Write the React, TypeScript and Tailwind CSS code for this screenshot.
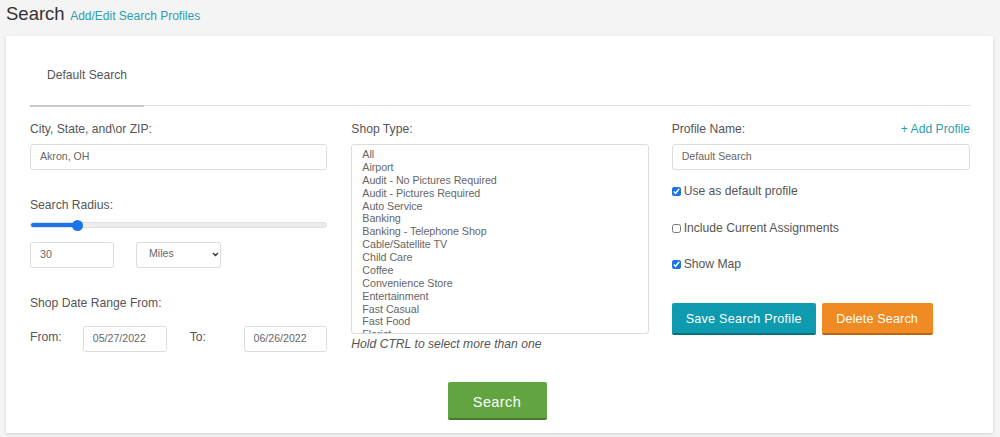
import React from "react";

const SHOP_TYPES = [
  "All",
  "Airport",
  "Audit - No Pictures Required",
  "Audit - Pictures Required",
  "Auto Service",
  "Banking",
  "Banking - Telephone Shop",
  "Cable/Satellite TV",
  "Child Care",
  "Coffee",
  "Convenience Store",
  "Entertainment",
  "Fast Casual",
  "Fast Food",
  "Florist",
  "Gas Station",
  "Grocery",
];

const field =
  "h-[26px] rounded-[3px] border border-[#dcdcdc] bg-white px-[9px] pb-[2px] text-[10.6px] text-[#666] outline-none";
const label = "h-[16px] text-[12.15px] text-[#555]";

function Check({ text, checked }: { text: string; checked?: boolean }) {
  return (
    <label className="flex h-[16px] items-center text-[12.15px] text-[#555]">
      <input
        type="checkbox"
        defaultChecked={checked}
        className="m-0 mr-[3px] h-[9px] w-[9px] accent-[#1a73e8]"
      />
      {text}
    </label>
  );
}

export default function App() {
  return (
    <div className="h-[437px] overflow-hidden bg-[#f4f4f4] font-['Liberation_Sans',Arial,sans-serif]">
      <header className="flex h-[36px] items-baseline gap-[5.5px] pl-[6px]">
        <h1 className="text-[18.5px] text-[#333]">Search</h1>
        <a className="text-[12px] text-[#2a9fb0]">Add/Edit Search Profiles</a>
      </header>

      <main className="mx-[6px] h-[397px] w-[987px] bg-white pl-[24px] pr-[23px] shadow-[0_1px_3px_rgba(0,0,0,0.15)]">
        {/* Tabs */}
        <div className="h-[70px] border-b border-[#ddd]">
          <div className="relative h-[70px] w-[114px] pl-[17px] pt-[30px] text-[12.1px] text-[#555]">
            Default Search
            <div className="absolute inset-x-0 bottom-[-1px] h-[2px] bg-[#c8c8c8]" />
          </div>
        </div>

        <div className="mt-[14px] grid grid-cols-3 gap-[24px]">
          {/* Location */}
          <section>
            <div className={label}>City, State, and\or ZIP:</div>
            <input defaultValue="Akron, OH" className={`${field} mt-[8px] w-full`} />
            <div className={`${label} mt-[26px]`}>Search Radius:</div>
            <input
              type="range"
              min={0}
              max={210}
              defaultValue={30}
              className="mt-[10px] block h-[6px] w-full appearance-none rounded-full border border-[#e0e0e0] bg-[linear-gradient(to_right,#1a73e8_16%,#ececec_16%)] [&::-webkit-slider-thumb]:h-[11px] [&::-webkit-slider-thumb]:w-[11px] [&::-webkit-slider-thumb]:appearance-none [&::-webkit-slider-thumb]:rounded-full [&::-webkit-slider-thumb]:bg-[#1a73e8]"
            />
            <div className="mt-[14px] flex gap-[22px]">
              <input defaultValue="30" className={`${field} w-[84px]`} />
              <div className="relative w-[85px]">
                <select className={`${field} block w-full appearance-none pl-[12px]`}>
                  <option>Miles</option>
                  <option>Kilometers</option>
                </select>
                <svg
                  viewBox="0 0 8 6"
                  className="pointer-events-none absolute right-[2px] top-[10px] h-[5px] w-[7px]"
                  fill="none"
                  stroke="#333"
                  strokeWidth="1.6"
                >
                  <path d="M1 1.2 L4 4.2 L7 1.2" />
                </svg>
              </div>
            </div>
            <div className={`${label} mt-[26px]`}>Shop Date Range From:</div>
            <div className="mt-[16px] flex">
              <span className="mt-[2px] w-[53px] text-[12.15px] text-[#555]">From:</span>
              <input defaultValue="05/27/2022" className={`${field} w-[84px]`} />
              <span className="ml-[23px] mt-[2px] w-[54px] text-[12.15px] text-[#555]">To:</span>
              <input defaultValue="06/26/2022" className={`${field} w-[84px] min-w-0`} />
            </div>
          </section>

          {/* Shop type */}
          <section>
            <div className={label}>Shop Type:</div>
            <select
              multiple
              defaultValue={[]}
              className="mt-[8px] block h-[190px] w-full overflow-hidden rounded-[3px] border border-[#dcdcdc] bg-white px-[10px] py-[3px] text-[10.73px] tracking-[-0.05px] text-[#666] outline-none"
            >
              {SHOP_TYPES.map((s) => (
                <option key={s}>{s}</option>
              ))}
            </select>
            <p className="mt-[1px] text-[12.15px] italic text-[#555]">Hold CTRL to select more than one</p>
          </section>

          {/* Profile */}
          <section className="-ml-[1px]">
            <div className={`${label} flex justify-between`}>
              <span>Profile Name:</span>
              <a className="text-[#2a9fb0]">+ Add Profile</a>
            </div>
            <input defaultValue="Default Search" className={`${field} mt-[8px] w-full`} />
            <div className="mt-[13px] flex flex-col gap-[20px]">
              <div className="mb-[1px]">
                <Check text="Use as default profile" checked />
              </div>
              <Check text="Include Current Assignments" />
              <Check text="Show Map" checked />
            </div>
            <div className="mt-[31px] flex gap-[6px]">
              <button className="h-[32px] w-[144px] rounded-[2px] border-b-2 border-[#0a6f80] bg-[#0e9aaf] pt-[2px] text-[12.6px] font-medium tracking-[0.25px] text-white">
                Save Search Profile
              </button>
              <button className="h-[32px] w-[111px] rounded-[2px] border-b-2 border-[#b96514] bg-[#f08a22] pt-[2px] text-[12.6px] font-medium tracking-[0.15px] text-white">
                Delete Search
              </button>
            </div>
          </section>
        </div>

        <div className="mt-[29px] flex justify-center pr-[6px]">
          <button className="h-[38px] w-[99px] rounded-[2px] border-b-2 border-[#467a2b] bg-[#62a43f] pt-[5px] text-[14.5px] tracking-[0.4px] text-white">
            Search
          </button>
        </div>
      </main>
    </div>
  );
}
